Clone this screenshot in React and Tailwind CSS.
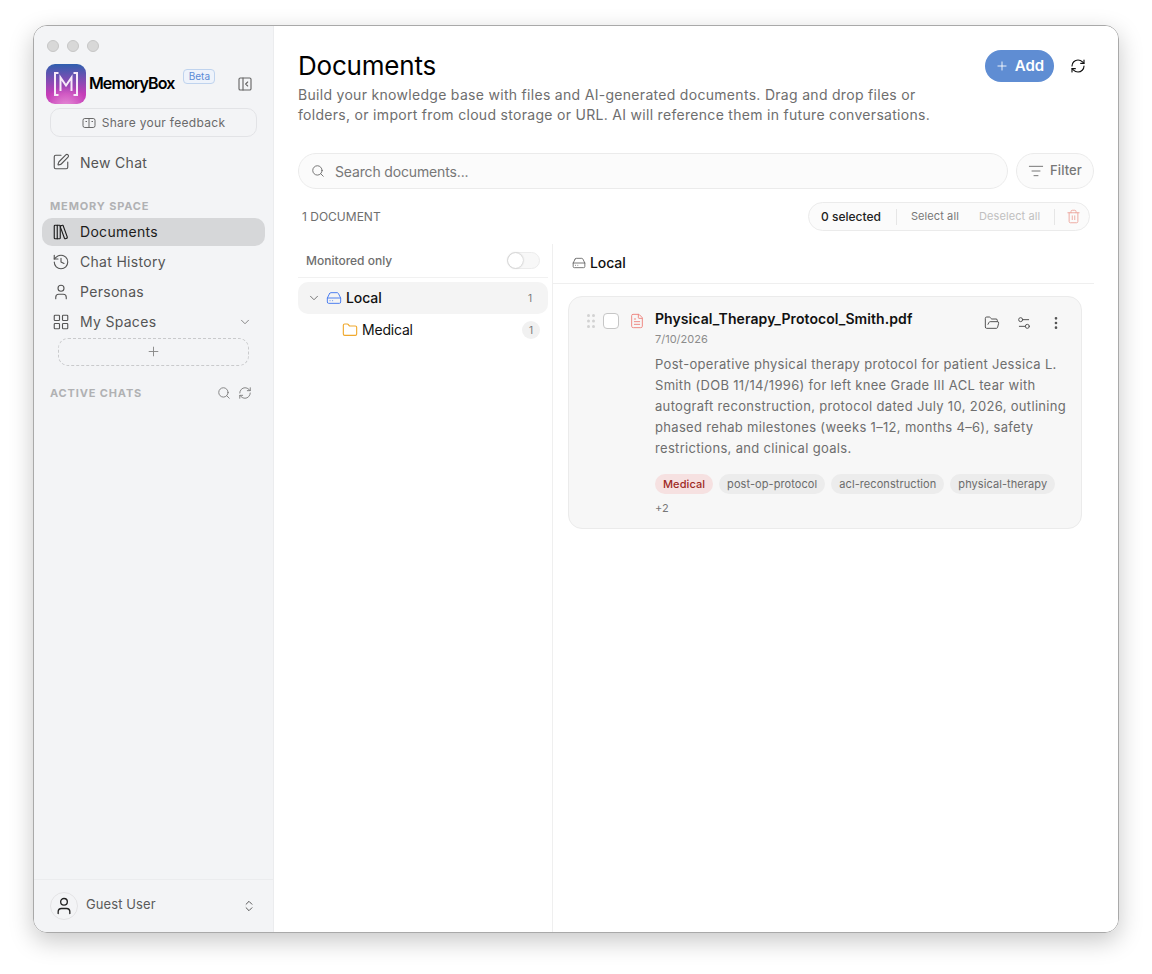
import {
    ChevronDown,
    ChevronsUpDown,
    EllipsisVertical,
    FileText,
    Folder,
    FolderOpen,
    HardDrive,
    History,
    LayoutGrid,
    LibraryBig,
    ListFilter,
    PanelLeftClose,
    Plus,
    RefreshCw,
    Search,
    Settings2,
    SquarePen,
    Trash2,
    User,
} from "lucide-react";

function Logo() {
    return (
        <div className="flex h-10 w-10 shrink-0 items-center justify-center rounded-[9px] bg-[radial-gradient(circle_at_50%_110%,#e891d8_0%,transparent_45%),linear-gradient(180deg,#2f5fae_0%,#c53db8_75%)]">
            <svg aria-hidden="true" className="h-[26px] w-[26px]" fill="none" viewBox="0 0 26 26">
                <path
                    d="M5.5 2H2v22h3.5M20.5 2H24v22h-3.5M7.5 20V6.5l5.5 8 5.5-8V20"
                    stroke="#f7e9f8"
                    strokeWidth="2"
                />
            </svg>
        </div>
    );
}

function GripDots() {
    return (
        <svg aria-hidden="true" className="mt-[4px] h-[16px] w-[8px] shrink-0 text-[#d2d2d2]" fill="currentColor" viewBox="0 0 8 16">
            <circle cx="1.5" cy="2.5" r="1.5" />
            <circle cx="6.5" cy="2.5" r="1.5" />
            <circle cx="1.5" cy="8" r="1.5" />
            <circle cx="6.5" cy="8" r="1.5" />
            <circle cx="1.5" cy="13.5" r="1.5" />
            <circle cx="6.5" cy="13.5" r="1.5" />
        </svg>
    );
}

function NavItem({ icon: Icon, label, active, children }) {
    return (
        <div
            className={`flex h-7 items-center rounded-[10px] pl-[10px] pr-[13px] ${
                active ? "bg-[#d6d7d9] text-[#1c1c1c]" : "text-[#555]"
            }`}
        >
            <Icon className="h-[18px] w-[18px] shrink-0" strokeWidth={1.5} />
            <span className="ml-[10px] flex-1 text-[14px] tracking-[0.3px]">{label}</span>
            {children}
        </div>
    );
}

function Sidebar() {
    return (
        <aside className="flex w-[240px] shrink-0 flex-col border-r border-[#ebecee] bg-[#f3f4f6]">
            <div className="flex gap-2 pl-[13px] pt-[14px]">
                <span className="h-3 w-3 rounded-full border border-[#c6c6c6] bg-[#d8d8d8]" />
                <span className="h-3 w-3 rounded-full border border-[#c6c6c6] bg-[#d8d8d8]" />
                <span className="h-3 w-3 rounded-full border border-[#c6c6c6] bg-[#d8d8d8]" />
            </div>

            <div className="mt-3 flex items-center pl-3 pr-[20px]">
                <Logo />
                <span className="ml-[3px] mb-[2px] text-[16px] font-semibold tracking-[-0.9px] text-black">
                    MemoryBox
                </span>
                <span className="mb-[16px] ml-[9px] flex h-[15px] w-8 items-center justify-center rounded-[4px] border border-[#bfd3ee] bg-[#eef3fb] text-[10px] text-[#5b8bd6]">
                    Beta
                </span>
                <PanelLeftClose className="ml-auto h-4 w-4 text-[#666]" strokeWidth={1.7} />
            </div>

            <div className="mx-4 mt-1 flex h-[29px] items-center justify-center gap-[6px] rounded-[10px] border border-[#e2e3e6] text-[12px] tracking-[0.3px] text-[#6a6a6a]">
                <svg aria-hidden="true" className="h-[14px] w-[14px]" fill="none" viewBox="0 0 14 14">
                    <rect x="1" y="2.5" width="12" height="9" rx="1.8" stroke="currentColor" />
                    <path d="M7 2.5v9M3.5 5.5h1.5M9.5 5.5h1.5" stroke="currentColor" />
                </svg>
                Share your feedback
            </div>

            <div className="mx-2 mt-[11px]">
                <NavItem icon={SquarePen} label="New Chat" />
            </div>

            <p className="ml-4 mt-[22px] text-[11px] font-bold tracking-[0.85px] text-[#b0b1b3]">MEMORY SPACE</p>

            <nav className="mx-2 mt-[3px] flex flex-col gap-[2px]">
                <NavItem active icon={LibraryBig} label="Documents" />
                <NavItem icon={History} label="Chat History" />
                <NavItem icon={User} label="Personas" />
                <NavItem icon={LayoutGrid} label="My Spaces">
                    <ChevronDown className="h-[14px] w-[14px] text-[#777]" strokeWidth={1.5} />
                </NavItem>
            </nav>

            <div className="ml-6 mr-6 mt-[2px] flex h-7 items-center justify-center rounded-[10px] border border-dashed border-[#c9cacc] text-[#888]">
                <Plus className="h-[15px] w-[15px]" strokeWidth={1.5} />
            </div>

            <div className="ml-4 mr-[21px] mt-[19px] flex items-center justify-between">
                <span className="text-[11px] font-bold tracking-[0.85px] text-[#b0b1b3]">ACTIVE CHATS</span>
                <div className="flex items-center gap-[7px] text-[#777]">
                    <Search className="h-[14px] w-[14px]" strokeWidth={1.5} />
                    <RefreshCw className="h-[14px] w-[14px]" strokeWidth={1.5} />
                </div>
            </div>

            <div className="mt-auto flex h-[53px] items-center border-t border-[#ebecee] pl-4 pr-[17px]">
                <div className="flex h-7 w-7 items-center justify-center rounded-full border border-[#e3e3e5]">
                    <User className="h-[20px] w-[20px] text-[#222]" strokeWidth={1.6} />
                </div>
                <span className="ml-2 mb-[2px] flex-1 text-[13px] tracking-[0.1px] text-[#5a5a5a]">Guest User</span>
                <ChevronsUpDown className="h-[14px] w-[14px] text-[#444]" strokeWidth={1.5} />
            </div>
        </aside>
    );
}

function Tag({ children, red }) {
    return (
        <span
            className={`flex h-5 items-center rounded-full px-2 text-[11px] tracking-[0.08px] ${
                red ? "bg-[#f6e1e1] font-medium text-[#9e2a24]" : "bg-[#ececec] text-[#6b6b6b]"
            }`}
        >
            {children}
        </span>
    );
}

function DocCard() {
    return (
        <div className="ml-[15px] mr-[12px] mt-3 flex rounded-[14px] border border-[#ebebeb] bg-[#f7f7f7] pb-[10px] pl-[18px] pr-[17px] pt-[12px]">
            <GripDots />
            <span className="ml-2 mt-[4px] h-4 w-4 shrink-0 rounded-[4px] border border-[#c6c6c6] bg-white" />
            <FileText className="ml-[10px] mt-[4px] h-4 w-4 shrink-0 text-[#ef8a84]" strokeWidth={1.5} />
            <div className="ml-[10px] min-w-0 flex-1">
                <div className="flex items-start justify-between">
                    <div>
                        <p className="text-[14px] font-semibold leading-5 tracking-[0.08px] text-[#111]">
                            Physical_Therapy_Protocol_Smith.pdf
                        </p>
                        <p className="mt-[2px] text-[11px] leading-4 text-[#8c8c8c]">7/10/2026</p>
                    </div>
                    <div className="mt-[6px] flex items-center gap-[16px] text-[#555]">
                        <FolderOpen className="h-4 w-4" strokeWidth={1.5} />
                        <Settings2 className="h-4 w-4" strokeWidth={1.5} />
                        <EllipsisVertical className="h-4 w-4" strokeWidth={2} />
                    </div>
                </div>
                <p className="mt-[7px] w-[416px] text-[13px] leading-[21px] tracking-[0.32px] text-[#6e6e6e]">
                    Post-operative physical therapy protocol for patient Jessica L. Smith (DOB 11/14/1996) for left knee Grade III ACL tear with autograft reconstruction, protocol dated July 10, 2026, outlining phased rehab milestones (weeks 1–12, months 4–6), safety restrictions, and clinical goals.
                </p>
                <div className="mt-[15px] flex flex-wrap items-center gap-x-[6px] gap-y-[4px]">
                    <Tag red>Medical</Tag>
                    <Tag>post-op-protocol</Tag>
                    <Tag>acl-reconstruction</Tag>
                    <Tag>physical-therapy</Tag>
                    <span className="w-full text-[11px] leading-5 text-[#777]">+2</span>
                </div>
            </div>
        </div>
    );
}

function Main() {
    return (
        <main className="flex min-w-0 flex-1 flex-col bg-white pl-6 pr-6">
            <div className="flex items-start justify-between pt-[21px]">
                <div>
                    <h1 className="mt-px text-[26px] leading-9 tracking-[-0.2px] text-black">Documents</h1>
                    <p className="mt-px w-[636px] text-[14px] leading-5 tracking-[0.3px] text-[#6e6e6e]">
                        Build your knowledge base with files and AI-generated documents. Drag and drop files or folders, or import from cloud storage or URL. AI will reference them in future conversations.
                    </p>
                </div>
                <div className="mt-[3px] flex items-center">
                    <button className="flex h-8 w-[69px] items-center justify-center gap-[6px] rounded-full bg-[#5f8dd3] text-[15px] font-semibold text-white">
                        <Plus className="h-[14px] w-[14px]" strokeWidth={1.5} />
                        Add
                    </button>
                    <RefreshCw className="ml-4 mr-2 h-4 w-4 text-[#111]" strokeWidth={1.7} />
                </div>
            </div>

            <div className="mt-[28px] flex gap-2">
                <div className="flex h-9 flex-1 items-center rounded-full border border-[#ebebeb] bg-[#fbfbfb] pl-3">
                    <Search className="h-[14px] w-[14px] text-[#666]" strokeWidth={1.5} />
                    <span className="ml-[10px] text-[14px] tracking-[-0.15px] text-[#777]">Search documents...</span>
                </div>
                <div className="flex h-9 w-[78px] items-center justify-center gap-[6px] rounded-full border border-[#ebebeb] bg-[#fbfbfb] text-[13px] font-medium tracking-[0.1px] text-[#777]">
                    <ListFilter className="h-4 w-4" strokeWidth={1.5} />
                    Filter
                </div>
            </div>

            <div className="mr-1 mt-[13px] flex items-center justify-between pl-1">
                <span className="text-[12px] text-[#6e6e6e]">1 DOCUMENT</span>
                <div className="flex h-[29px] w-[282px] items-center rounded-full border border-[#ebebeb] bg-[#fbfbfb] pl-[12px] text-[11px]">
                    <span className="text-[12px] font-medium text-[#222]">0 selected</span>
                    <span className="ml-[15px] h-4 w-px bg-[#e6e6e6]" />
                    <span className="ml-[14px] tracking-[0.1px] text-[#777]">Select all</span>
                    <span className="ml-[20px] tracking-[0.1px] text-[#c0c0c0]">Deselect all</span>
                    <span className="ml-[14px] h-4 w-px bg-[#e6e6e6]" />
                    <Trash2 className="ml-[11px] h-[15px] w-[15px] text-[#eda79f]" strokeWidth={1.5} />
                </div>
            </div>

            <div className="mt-[13px] flex min-h-0 flex-1">
                <div className="w-[255px] shrink-0 border-r border-[#efefef] pr-1">
                    <div className="flex h-[34px] items-center justify-between border-b border-[#f1f1f1] pl-2 pr-2">
                        <span className="text-[12px] font-medium text-[#6e6e6e]">Monitored only</span>
                        <span className="flex h-[17px] w-[33px] items-center rounded-full border border-[#ececec] bg-[#f8f8f8]">
                            <span className="h-[15px] w-[15px] rounded-full bg-white shadow-[0_0_2px_rgba(0,0,0,0.35)]" />
                        </span>
                    </div>
                    <div className="mt-1 flex h-8 items-center rounded-[10px] bg-[#f4f4f4] pl-[9px] pr-[16px]">
                        <ChevronDown className="h-[14px] w-[14px] text-[#666]" strokeWidth={1.5} />
                        <HardDrive className="ml-[5px] h-4 w-4 text-[#4f80f0]" strokeWidth={1.5} />
                        <span className="ml-1 flex-1 pb-[2px] text-[14px] font-medium tracking-[-0.1px] text-[#111]">Local</span>
                        <span className="text-[10px] text-[#777]">1</span>
                    </div>
                    <div className="flex h-8 items-center pl-[44px] pr-2">
                        <Folder className="h-4 w-4 text-[#f0a92e]" strokeWidth={1.7} />
                        <span className="ml-1 flex-1 pb-[2px] text-[14px] tracking-[-0.2px] text-[#111]">Medical</span>
                        <span className="flex h-[18px] w-[18px] items-center justify-center rounded-full bg-[#f1f1f1] text-[10px] text-[#777]">1</span>
                    </div>
                </div>
                <div className="min-w-0 flex-1">
                    <div className="flex h-10 items-center border-b border-[#efefef] pb-[2px] pl-[19px]">
                        <HardDrive className="h-[14px] w-[14px] text-[#666]" strokeWidth={1.5} />
                        <span className="ml-1 text-[14px] font-medium tracking-[-0.1px] text-[#111]">Local</span>
                    </div>
                    <DocCard />
                </div>
            </div>
        </main>
    );
}

export default function App() {
    return (
        <div className="flex h-[974px] w-[1152px] items-start overflow-hidden bg-white pl-[33px] pt-[25px] font-['Inter',sans-serif]">
            <div className="flex h-[908px] w-[1086px] overflow-hidden rounded-[14px] border border-[#a9a9a9] shadow-[0_8px_24px_rgba(0,0,0,0.22)]">
                <Sidebar />
                <Main />
            </div>
        </div>
    );
}
